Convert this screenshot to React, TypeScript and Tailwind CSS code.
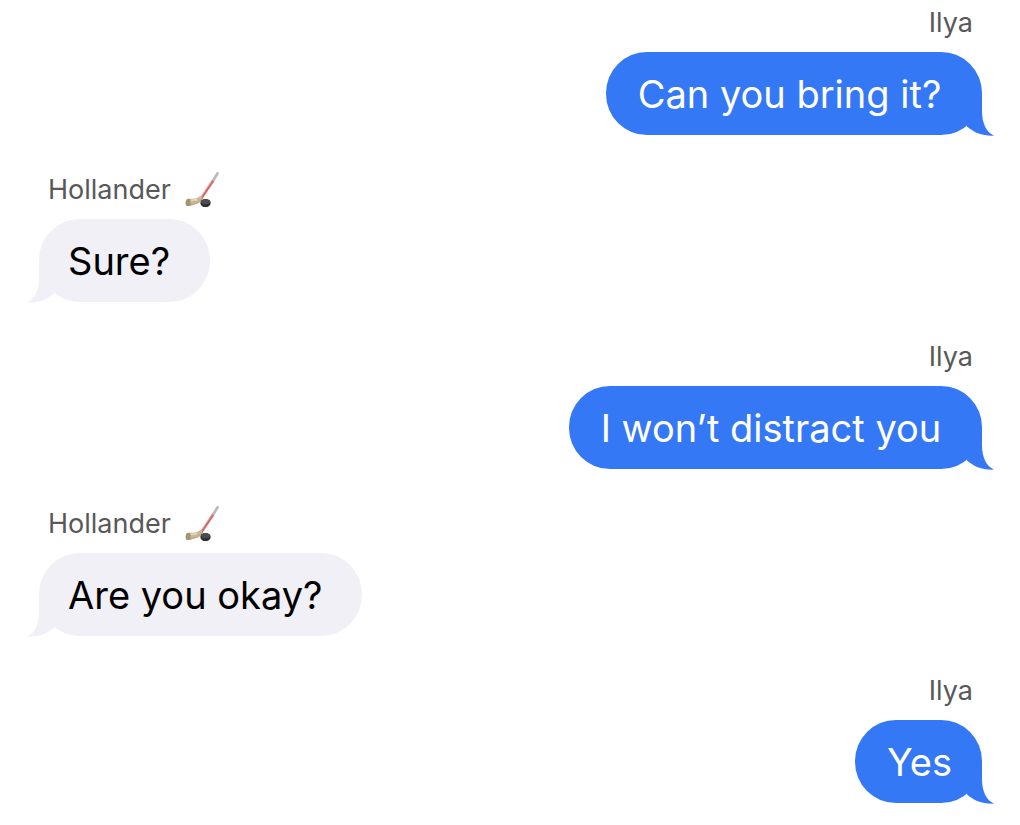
interface Message {
  id: number;
  sender: string;
  text: string;
  mine: boolean;
}

const messages: Message[] = [
  { id: 1, sender: "Ilya", text: "Can you bring it? ", mine: true },
  { id: 2, sender: "Hollander", text: "Sure? ", mine: false },
  { id: 3, sender: "Ilya", text: "I won’t distract you ", mine: true },
  { id: 4, sender: "Hollander", text: "Are you okay? ", mine: false },
  { id: 5, sender: "Ilya", text: "Yes", mine: true },
];

function HockeyIcon() {
  return (
    <svg viewBox="0 0 36 38" className="h-[38px] w-9" aria-hidden="true">
      <path d="M32.5 2.500 27.500 10.500" stroke="#bdb9bd" strokeWidth="2.800" strokeLinecap="round" />
      <path d="M28 9.700 15.800 28" stroke="#cf6a69" strokeWidth="2.600" />
      <path d="M27 9.200 14.900 27.400" stroke="#e9bdb2" strokeWidth="1" />
      <path d="M17.200 26.500c-.8 3-2.200 4.800-4.500 5.600L3.500 35c-2 .5-2.800-.6-2.800-3 0-2.700.8-4 2.800-4.100l7-.5c2-.2 3.200-.9 4.400-2.300z" fill="#c9b799" />
      <path d="M1.400 28.900C2 28.100 3 27.900 5 27.800l.8 6.500-2.500.8c-2 .4-2.600-1-2.600-3 0-1.200.2-2.400.7-3.200z" fill="#a09674" />
      <path d="M6 29.300 12 28.700" stroke="#e4dac6" strokeWidth="1.400" />
      <path d="M5 34.400 12.500 32c2-.8 3.200-2 4-4" stroke="#b98f55" strokeWidth=".8" fill="none" />
      <ellipse cx="20.500" cy="32" rx="5.200" ry="4.100" fill="#2f3031" />
      <ellipse cx="20.500" cy="30.800" rx="4.500" ry="2.500" fill="#4a4c4d" />
    </svg>
  );
}

function Tail({ mine }: { mine: boolean }) {
  return (
    <svg
      viewBox="0 0 30 43"
      aria-hidden="true"
      className={
        mine
          ? "absolute -right-3 -bottom-px h-[43px] w-[30px] fill-[#3478f6]"
          : "absolute -left-3 -bottom-px h-[43px] w-[30px] -scale-x-100 fill-[#f1f0f6]"
      }
    >
      <path d="M3 33.500C10 39.500 18 43 30 42.600 22 39 18 30 18 18V0H3z" />
    </svg>
  );
}

function MessageItem({ message }: { message: Message }) {
  const { sender, text, mine } = message;

  return (
    <li className={mine ? "flex flex-col items-end" : "flex flex-col items-start"}>
      <div className="flex h-8 items-center gap-[14px] px-[9px] text-[27px] leading-8 text-[#58585a]">
        <span>{sender}</span>
        {!mine && <HockeyIcon />}
      </div>
      <div
        className={
          mine
            ? "relative mt-[13px] rounded-[41px] bg-[#3478f6] pt-[17px] pr-[30px] pb-[15px] pl-8 text-white"
            : "relative mt-[13px] rounded-[41px] bg-[#f1f0f6] px-[29px] pt-[17px] pb-[15px] text-black"
        }
      >
        <Tail mine={mine} />
        <p className="relative text-[38px] leading-[51px] whitespace-pre">{text}</p>
      </div>
    </li>
  );
}

export default function App() {
  return (
    <main className="min-h-screen bg-white pt-[7px] pr-[38px] pb-5 pl-[39px] font-['Inter','Liberation_Sans',sans-serif]">
      <ul className="flex flex-col gap-[39px]">
        {messages.map((message) => (
          <MessageItem key={message.id} message={message} />
        ))}
      </ul>
    </main>
  );
}
